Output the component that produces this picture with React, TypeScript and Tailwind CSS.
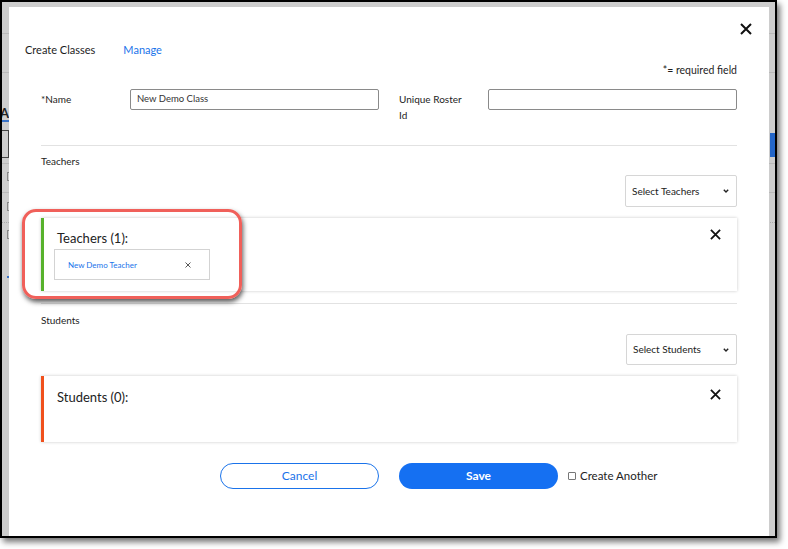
import React from "react";

const XIcon = ({ size, stroke }: { size: number; stroke: number }) => (
  <svg width={size} height={size} viewBox="0 0 12 12" fill="none">
    <path d="M1 1L11 11M11 1L1 11" stroke="#111" strokeWidth={stroke} strokeLinecap="butt" />
  </svg>
);

const Chevron = () => (
  <svg width="6" height="4" viewBox="0 0 6 4" fill="none">
    <path d="M0.8 0.8L3 3L5.2 0.8" stroke="#222" strokeWidth="1.4" />
  </svg>
);

const SelectBox = ({ label, w, h }: { label: string; w: string; h: string }) => (
  <div className={`flex items-center justify-between border border-[#d6d6d6] rounded-[2px] pl-[6px] pr-[7px] ${w} ${h}`}>
    <span className="text-[10px] text-[#222]">{label}</span>
    <Chevron />
  </div>
);

export default function App() {
  return (
    <div className="w-[788px] h-[549px] bg-white overflow-hidden" style={{ fontFamily: "Lato, 'Open Sans', sans-serif" }}>
      <div className="relative w-[777px] h-[538px] border-2 border-black bg-[#cdcdcd] overflow-hidden shadow-[3px_4px_6px_rgba(0,0,0,0.55)]">
        {/* dimmed background page */}
        <div className="absolute inset-0">
          <div className="absolute left-0 right-0 top-[31px] h-px bg-[#b9b9b9]" />
          <div className="absolute left-0 right-0 top-[70px] h-px bg-[#b9b9b9]" />
          <div className="absolute left-[-2px] top-[102px] text-[13px] font-bold text-[#222]">A</div>
          <div className="absolute left-0 w-[7px] top-[118px] h-[2px] bg-[#3a73c7]" />
          <div className="absolute left-[-2px] w-[9px] top-[128px] h-[28px] border border-[#444]" />
          <div className="absolute left-[5px] top-[170px] w-[5px] h-[9px] border border-[#888]" />
          <div className="absolute left-[5px] top-[200px] w-[5px] h-[9px] border border-[#888]" />
          <div className="absolute left-0 right-0 top-[220px] border-t border-dotted border-[#aaa]" />
          <div className="absolute left-[5px] top-[228px] w-[5px] h-[9px] border border-[#888]" />
          <div className="absolute left-[5px] top-[274px] w-[2px] h-[2px] bg-[#3a73c7]" />
          <div className="absolute right-0 w-[5px] top-[131px] h-[24px] bg-[#2466c8]" />
          <div className="absolute left-0 right-0 top-[161px] h-px bg-[#b9b9b9]" />
          <div className="absolute left-0 right-0 top-[190px] h-px bg-[#b9b9b9]" />
        </div>

        {/* modal */}
        <div className="relative ml-[7px] mt-[5px] w-[760px] h-[560px] bg-white text-[#1d1d1d]">
          <button className="absolute right-[17px] top-[16px]">
            <XIcon size={12} stroke={2} />
          </button>

          <div className="flex gap-[28px] pl-[16px] pt-[36px] text-[11px] leading-[14px]">
            <span>Create Classes</span>
            <span className="text-[#1a73ea]">Manage</span>
          </div>

          <div className="px-[32px]">
            <div className="mt-[7px] text-right text-[10.5px] leading-[13px]">*= required field</div>

            <div className="mt-[12px] grid grid-cols-2 gap-[20px]">
              <div className="flex">
                <div className="w-[89px] text-[10px] leading-[16px] pt-[2px]">*Name</div>
                <div className="w-[249px] h-[21px] border border-[#8a8a8a] rounded-[2px] flex items-center px-[6px] text-[9.5px] text-[#333]">
                  New Demo Class
                </div>
              </div>
              <div className="flex">
                <div className="w-[89px] text-[10px] leading-[16px] pt-[2px] pr-[18px]">Unique Roster Id</div>
                <div className="w-[249px] h-[21px] border border-[#8a8a8a] rounded-[2px]" />
              </div>
            </div>

            <div className="mt-[22px] h-px bg-[#e2e2e2]" />

            <div className="mt-[9px] text-[10px] leading-[13px]">Teachers</div>
            <div className="mt-[7px] flex justify-end">
              <SelectBox label="Select Teachers" w="w-[112px]" h="h-[32px]" />
            </div>

            <div className="relative mt-[11px] h-[73px] border-l-[3px] border-[#57b22c] bg-white shadow-[0_0_3px_rgba(0,0,0,0.22)] pl-[13px] pt-[12px]">
              <div className="text-[13px] leading-[16px] text-[#222]">Teachers (1):</div>
              <div className="mt-[3px] -ml-[3px] w-[156px] h-[31px] border border-[#d3d3d3] flex items-center justify-between pl-[13px] pr-[18px]">
                <span className="text-[8px] text-[#1a73ea]">New Demo Teacher</span>
                <XIcon size={6} stroke={1.4} />
              </div>
              <button className="absolute right-[16px] top-[11px]">
                <XIcon size={11} stroke={2} />
              </button>
            </div>

            <div className="mt-[12px] h-px bg-[#e2e2e2]" />

            <div className="mt-[10px] text-[10px] leading-[13px]">Students</div>
            <div className="mt-[7px] flex justify-end">
              <SelectBox label="Select Students" w="w-[111px]" h="h-[31px]" />
            </div>

            <div className="relative mt-[11px] h-[66px] border-l-[3px] border-[#f0501c] bg-white shadow-[0_0_3px_rgba(0,0,0,0.22)] pl-[13px] pt-[13px]">
              <div className="text-[13px] leading-[16px] text-[#222]">Students (0):</div>
              <button className="absolute right-[16px] top-[13px]">
                <XIcon size={11} stroke={2} />
              </button>
            </div>

            <div className="mt-[21px] grid grid-cols-[1fr_auto_1fr] items-center">
              <div />
              <div className="flex gap-[20px]">
                <button className="w-[159px] h-[26px] rounded-full border border-[#1a73ea] text-[#1a73ea] text-[12px]">Cancel</button>
                <button className="w-[159px] h-[26px] rounded-full bg-[#1570f2] text-white text-[12px] font-bold">Save</button>
              </div>
              <label className="flex items-center pl-[10px] gap-[4px] text-[11.5px] text-[#222]">
                <span className="w-[8px] h-[8px] border border-[#777] rounded-[1px] bg-white" />
                Create Another
              </label>
            </div>
          </div>

          {/* highlight annotation */}
          <div className="absolute left-[13px] top-[202px] w-[220px] h-[90px] rounded-[14px] border-[3px] border-[#f0605a] shadow-[1px_3px_5px_rgba(0,0,0,0.65)] pointer-events-none" />
        </div>
      </div>
    </div>
  );
}
